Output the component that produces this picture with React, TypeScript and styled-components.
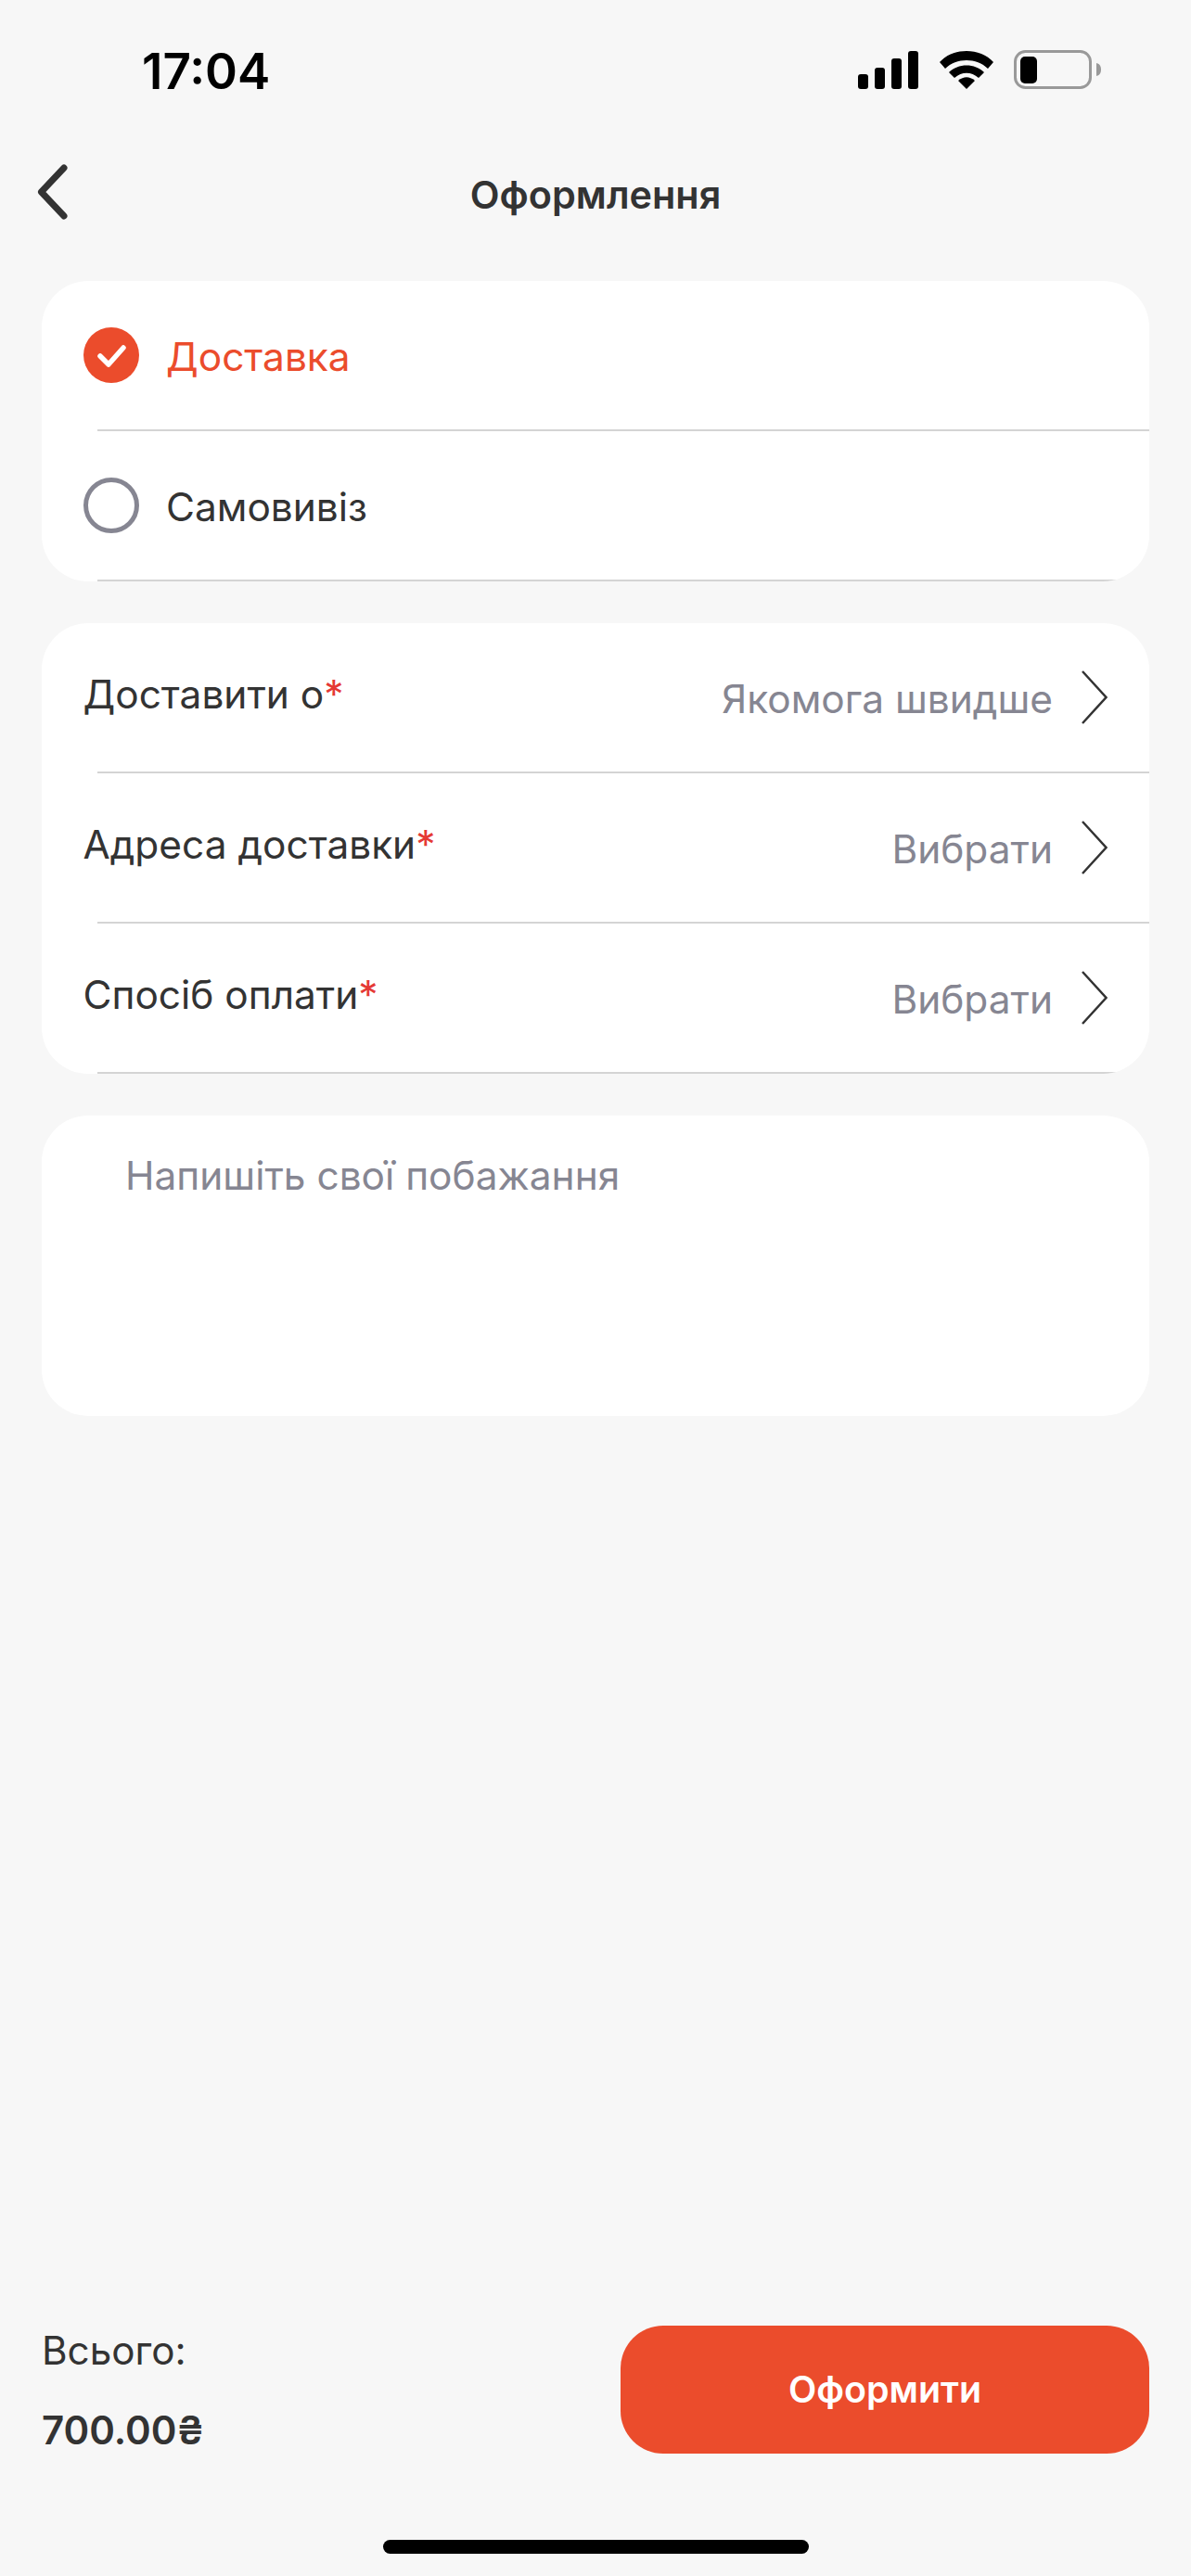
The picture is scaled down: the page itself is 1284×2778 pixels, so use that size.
import React from "react";
import styled, { createGlobalStyle } from "styled-components";

const GlobalStyle = createGlobalStyle`
  html, body {
    margin: 0;
    padding: 0;
    background: #f7f7f7;
  }
  * {
    box-sizing: border-box;
  }
`;

const Screen = styled.div`
  width: 1284px;
  height: 2778px;
  display: flex;
  flex-direction: column;
  background: #f7f7f7;
  font-family: Inter, "Noto Sans", sans-serif;
  color: #333;
`;

const StatusBar = styled.div`
  height: 124px;
  padding: 47px 97px 0 153px;
  display: flex;
  justify-content: space-between;
  align-items: flex-start;
`;

const Time = styled.div`
  font-size: 53px;
  line-height: 60px;
  font-weight: 600;
  color: #000;
`;

const StatusIcons = styled.svg`
  width: 262px;
  height: 46px;
  margin-top: 7px;
`;

const Header = styled.div`
  height: 179px;
  padding: 0 45px 0 40px;
  display: flex;
  align-items: flex-start;
  position: relative;
`;

const BackIcon = styled.svg`
  width: 36px;
  height: 64px;
  margin-top: 50px;
`;

const Title = styled.div`
  position: absolute;
  left: 0;
  right: 0;
  top: 62px;
  text-align: center;
  font-size: 41.4px;
  line-height: 48px;
  font-weight: 600;
`;

const Content = styled.div`
  flex: 1;
  padding: 0 45px;
  display: flex;
  flex-direction: column;
  gap: 45px;
`;

const Card = styled.div`
  background: #fff;
  border-radius: 50px;
  overflow: hidden;
`;

const Row = styled.div`
  height: 162px;
  margin-left: 60px;
  padding: 0 45px 0 0;
  display: flex;
  align-items: center;
  justify-content: space-between;
  border-bottom: 2px solid #d4d4d4;
`;

const OptionBody = styled.div`
  display: flex;
  align-items: center;
  gap: 30px;
  margin-left: -15px;
`;

const OptionLabel = styled.span<{ $active?: boolean }>`
  font-size: 42.4px;
  line-height: 50px;
  padding-top: 3px;
  margin-left: -1px;
  color: ${(props) => (props.$active ? "#eb4c2c" : "#333")};
`;

const RadioOff = styled.span`
  width: 60px;
  height: 60px;
  border-radius: 50%;
  border: 5px solid #868692;
`;

const RadioOn = styled.svg`
  width: 60px;
  height: 60px;
`;

const RowLabel = styled.div`
  margin-left: -15.5px;
  margin-top: -7px;
  font-size: 42.4px;
  line-height: 50px;
`;

const Required = styled.span`
  color: #e53935;
`;

const RowValue = styled.div`
  display: flex;
  align-items: center;
  gap: 31px;
  font-size: 42.4px;
  line-height: 50px;
  color: #868692;
`;

const ValueText = styled.span`
  padding-top: 3px;
`;

const ChevronIcon = styled.svg`
  width: 28px;
  height: 58px;
`;

const Wishes = styled.div`
  height: 324px;
  background: #fff;
  border-radius: 50px;
  padding: 40px 90px;
  font-size: 42.4px;
  line-height: 50px;
  color: #868692;
`;

const Footer = styled.div`
  height: 231px;
  padding: 0 45px;
  display: flex;
  justify-content: space-between;
  align-items: flex-start;
`;

const Totals = styled.div`
  display: flex;
  flex-direction: column;
  gap: 36px;
  padding-top: 2px;
`;

const TotalLabel = styled.div`
  font-size: 42.2px;
  line-height: 50px;
`;

const TotalValue = styled.div`
  font-size: 42px;
  line-height: 50px;
  font-weight: 600;
`;

const SubmitButton = styled.button`
  width: 570px;
  height: 138px;
  border: none;
  border-radius: 46px;
  background: #eb4c2c;
  color: #fff;
  font-family: inherit;
  font-size: 39.4px;
  font-weight: 600;
`;

const HomeBar = styled.div`
  width: 459px;
  height: 15px;
  margin: 0 auto 24px;
  border-radius: 8px;
  background: #000;
`;

const Chevron = () => (
  <ChevronIcon viewBox="0 0 28 58">
    <path d="M1 1 L26.5 29 L1 57" fill="none" stroke="#333" strokeWidth="2.5" />
  </ChevronIcon>
);

const rows = [
  { label: "Доставити о", value: "Якомога швидше" },
  { label: "Адреса доставки", value: "Вибрати" },
  { label: "Спосіб оплати", value: "Вибрати" },
];

export default function App() {
  return (
    <Screen>
      <GlobalStyle />
      <StatusBar>
        <Time>17:04</Time>
        <StatusIcons viewBox="0 0 262 46">
          <rect x="0" y="26" width="11" height="16" rx="3" fill="#000" />
          <rect x="18" y="19" width="11" height="23" rx="3" fill="#000" />
          <rect x="36" y="9" width="11" height="33" rx="3" fill="#000" />
          <rect x="54" y="1" width="11" height="41" rx="3" fill="#000" />
          <path d="M88 13 C102 -3 132 -3 146 13 L140 20 C128 8 106 8 94 20 Z" fill="#000" />
          <path d="M98 24 C108 14 126 14 136 24 L130 30 C122 23 112 23 104 30 Z" fill="#000" />
          <path d="M108 33 C114 28 120 28 126 33 L117 42 Z" fill="#000" />
          <rect x="169.5" y="1.5" width="81" height="39" rx="11" fill="none" stroke="#999" strokeWidth="3" />
          <rect x="175" y="7" width="18" height="29" rx="5" fill="#000" />
          <path d="M257 14 C261 15 262 18 262 21 C262 24 261 27 257 28 Z" fill="#999" />
        </StatusIcons>
      </StatusBar>
      <Header>
        <BackIcon viewBox="0 0 36 64">
          <path
            d="M29 7 L4.5 33 L29 59"
            fill="none"
            stroke="#333"
            strokeWidth="7"
            strokeLinecap="round"
            strokeLinejoin="round"
          />
        </BackIcon>
        <Title>Оформлення</Title>
      </Header>
      <Content>
        <Card>
          <Row>
            <OptionBody>
              <RadioOn viewBox="0 0 60 60">
                <circle cx="30" cy="30" r="30" fill="#eb4c2c" />
                <path
                  d="M18 31 L27 40 L43 22"
                  fill="none"
                  stroke="#fff"
                  strokeWidth="5.5"
                  strokeLinecap="round"
                  strokeLinejoin="round"
                />
              </RadioOn>
              <OptionLabel $active>Доставка</OptionLabel>
            </OptionBody>
          </Row>
          <Row>
            <OptionBody>
              <RadioOff />
              <OptionLabel>Самовивіз</OptionLabel>
            </OptionBody>
          </Row>
        </Card>
        <Card>
          {rows.map((row) => (
            <Row key={row.label}>
              <RowLabel>
                {row.label}
                <Required>*</Required>
              </RowLabel>
              <RowValue>
                <ValueText>{row.value}</ValueText>
                <Chevron />
              </RowValue>
            </Row>
          ))}
        </Card>
        <Wishes>Напишіть свої побажання</Wishes>
      </Content>
      <Footer>
        <Totals>
          <TotalLabel>Всього:</TotalLabel>
          <TotalValue>700.00₴</TotalValue>
        </Totals>
        <SubmitButton>Оформити</SubmitButton>
      </Footer>
      <HomeBar />
    </Screen>
  );
}
